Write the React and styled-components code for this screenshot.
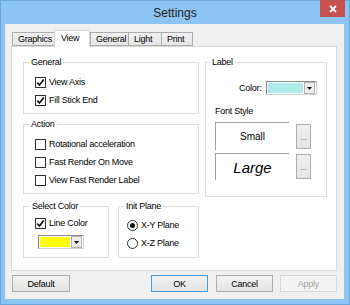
import React from 'react'
import styled, { createGlobalStyle } from 'styled-components'

const Global = createGlobalStyle`
  html, body { margin: 0; padding: 0; }
  body {
    font-family: "Liberation Sans", Arial, sans-serif;
    font-size: 9px;
    letter-spacing: -0.25px;
    color: #000;
  }
`

const Window = styled.div`
  width: 350px;
  height: 305px;
  box-sizing: border-box;
  background: #8cc4f4;
  border: 1px solid #6aa6dc;
  display: flex;
  flex-direction: column;
  position: relative;
`

const TitleBar = styled.div`
  height: 23px;
  display: flex;
  align-items: center;
  justify-content: center;
  font-size: 12px;
  letter-spacing: 0;
  color: #222;
`

const CloseBtn = styled.div`
  position: absolute;
  top: -1px;
  right: 4px;
  width: 25px;
  height: 17px;
  background: #c75050;
  display: flex;
  align-items: center;
  justify-content: center;
`

const Client = styled.div`
  margin: 0 5px 5px 4px;
  flex: 1;
  background: #f0f0f0;
  padding: 6px 7px 7px 6px;
  display: flex;
  flex-direction: column;
`

const TabStrip = styled.div`
  height: 17px;
  margin-bottom: -1px;
  padding-left: 1px;
  display: flex;
  align-items: flex-end;
`

const Tab = styled.div`
  box-sizing: border-box;
  width: ${p => p.$w}px;
  height: ${p => (p.$active ? 17 : 14)}px;
  margin-bottom: ${p => (p.$active ? 0 : 1)}px;
  padding: ${p => (p.$active ? '2px 0 0 6px' : '1px 0 0 5px')};
  border: 1px solid ${p => (p.$active ? '#d9d9d9' : '#acacac')};
  border-bottom: ${p => (p.$active ? 'none' : '1px solid #acacac')};
  border-right-width: ${p => (p.$last || p.$active ? 1 : 0)}px;
  background: ${p => (p.$active ? '#fff' : 'linear-gradient(#f2f2f2, #e6e6e6)')};
  position: relative;
  z-index: ${p => (p.$active ? 2 : 0)};
  line-height: 11px;
`

const Panel = styled.div`
  height: 225px;
  box-sizing: border-box;
  background: #fff;
  border: 1px solid #d9d9d9;
  padding: 10px 9px 0 11px;
  display: flex;
  gap: 6px;
  position: relative;
  z-index: 1;
`

const Column = styled.div`
  display: flex;
  flex-direction: column;
  width: ${p => p.$w}px;
`

const Group = styled.fieldset`
  box-sizing: border-box;
  margin: 0;
  margin-top: ${p => p.$mt || 0}px;
  width: ${p => p.$w || 'auto'};
  height: ${p => p.$h}px;
  border: 1px solid #dcdcdc;
  padding: ${p => p.$pad};
  display: flex;
  flex-direction: column;
  gap: ${p => p.$gap ?? 4}px;
  min-width: 0;
`

const Legend = styled.legend`
  padding: 0 2px;
  margin-left: ${p => p.$ml}px;
  line-height: 11px;
`

const BottomRow = styled.div`
  display: flex;
  gap: 9px;
  margin-top: 7px;
`

const Option = styled.label`
  display: flex;
  align-items: center;
  gap: 3px;
  height: 14px;
  line-height: 11px;
`

const Box = styled.span`
  width: 11px;
  height: 11px;
  box-sizing: border-box;
  border: 1px solid #333;
  background: #fff;
  display: flex;
  align-items: center;
  justify-content: center;
  border-radius: ${p => (p.$round ? '50%' : '0')};
  flex-shrink: 0;
`

const Dot = styled.span`
  width: 5px;
  height: 5px;
  border-radius: 50%;
  background: #111;
`

const Combo = styled.div`
  width: ${p => p.$w}px;
  height: 14px;
  box-sizing: border-box;
  border: 1px solid #8a8a8a;
  border-right-color: #d0d0d0;
  border-bottom-color: #d0d0d0;
  margin-left: ${p => p.$ml || 0}px;
  display: flex;
  background: #fff;
`

const Swatch = styled.div`
  flex: 1;
  background: ${p => p.$color};
  margin: 1px;
`

const Arrow = styled.div`
  width: 11px;
  box-sizing: border-box;
  border: 1px solid #b5b5b5;
  background: #eeeeee;
  display: flex;
  align-items: center;
  justify-content: center;
  margin-right: 1px;
`

const ColorRow = styled.div`
  display: flex;
  align-items: center;
  gap: 4px;
  padding-left: 24px;
  height: 14px;
`

const Caption = styled.div`
  line-height: 11px;
  margin-top: ${p => p.$mt || 0}px;
`

const FontRow = styled.div`
  display: flex;
  align-items: center;
  gap: 7px;
  height: ${p => p.$h}px;
  margin-top: ${p => p.$mt || 0}px;
`

const Sample = styled.div`
  width: 74px;
  height: 100%;
  box-sizing: border-box;
  border-top: 1px solid #a0a0a0;
  border-left: 1px solid #a0a0a0;
  display: flex;
  align-items: center;
  justify-content: center;
  font-size: ${p => p.$size}px;
  font-style: ${p => (p.$italic ? 'italic' : 'normal')};
  letter-spacing: 0;
`

const Dots = styled.div`
  width: 15px;
  height: 25px;
  box-sizing: border-box;
  border: 1px solid #adadad;
  background: linear-gradient(#f0f0f0, #e4e4e4);
  display: flex;
  align-items: center;
  justify-content: center;
  padding-top: 2px;
  font-size: 8px;
  color: #555;
  letter-spacing: 0;
`

const ButtonRow = styled.div`
  display: flex;
  margin-top: 4px;
  padding-left: 1px;
  height: 17px;
`

const Button = styled.div`
  width: ${p => p.$w || 57}px;
  margin-left: ${p => p.$ml || 0}px;
  box-sizing: border-box;
  border: 1px solid ${p => (p.$primary ? '#4a9de0' : p.$disabled ? '#d9d9d9' : '#acacac')};
  background: ${p => (p.$disabled ? '#f4f4f4' : 'linear-gradient(#f2f2f2, #e4e4e4)')};
  color: ${p => (p.$disabled ? '#a3a3a3' : '#000')};
  display: flex;
  align-items: center;
  justify-content: center;
`

const Check = () => (
  <svg width="9" height="9" viewBox="0 0 9 9">
    <path d="M1.3 4.6 L3.5 7 L7.8 1.4" fill="none" stroke="#111" strokeWidth="1.7" />
  </svg>
)

const Down = () => (
  <svg width="5" height="3" viewBox="0 0 5 3">
    <path d="M0 0 H5 L2.5 3 Z" fill="#111" />
  </svg>
)

const CheckOpt = ({ checked, children }) => (
  <Option>
    <Box>{checked && <Check />}</Box>
    {children}
  </Option>
)

const RadioOpt = ({ checked, children }) => (
  <Option>
    <Box $round>{checked && <Dot />}</Box>
    {children}
  </Option>
)

const tabs = [
  { name: 'Graphics', w: 42 },
  { name: 'View', w: 36, active: true },
  { name: 'General', w: 38 },
  { name: 'Light', w: 33 },
  { name: 'Print', w: 32, last: true },
]

export default function App() {
  return (
    <>
      <Global />
      <Window>
        <TitleBar>Settings</TitleBar>
        <CloseBtn>
          <svg width="8" height="8" viewBox="0 0 8 8">
            <path d="M1 1 L7 7 M7 1 L1 7" stroke="#fff" strokeWidth="1.8" />
          </svg>
        </CloseBtn>
        <Client>
          <TabStrip>
            {tabs.map(t => (
              <Tab key={t.name} $w={t.w} $active={t.active} $last={t.last}>
                {t.name}
              </Tab>
            ))}
          </TabStrip>
          <Panel>
            <Column $w={176}>
              <Group $h={57} $pad="7px 0 0 11px">
                <Legend $ml={-6}>General</Legend>
                <CheckOpt checked>View Axis</CheckOpt>
                <CheckOpt checked>Fill Stick End</CheckOpt>
              </Group>
              <Group $h={75} $mt={5} $pad="7px 0 0 11px">
                <Legend $ml={-6}>Action</Legend>
                <CheckOpt>Rotational acceleration</CheckOpt>
                <CheckOpt>Fast Render On Move</CheckOpt>
                <CheckOpt>View Fast Render Label</CheckOpt>
              </Group>
              <BottomRow>
                <Group $w="86px" $h={57} $pad="4px 0 0 11px" $gap={5}>
                  <Legend $ml={-5}>Select Color</Legend>
                  <CheckOpt checked>Line Color</CheckOpt>
                  <Combo $w={46} $ml={3}>
                    <Swatch $color="#ffff00" />
                    <Arrow><Down /></Arrow>
                  </Combo>
                </Group>
                <Group $w="81px" $h={57} $pad="6px 0 0 8px">
                  <Legend $ml={-3}>Init Plane</Legend>
                  <RadioOpt checked>X-Y Plane</RadioOpt>
                  <RadioOpt>X-Z Plane</RadioOpt>
                </Group>
              </BottomRow>
            </Column>
            <Column $w={122}>
              <Group $h={140} $pad="13px 0 0 9px" $gap={0}>
                <Legend $ml={-5}>Label</Legend>
                <ColorRow>
                  Color:
                  <Combo $w={51}>
                    <Swatch $color="#aeecec" />
                    <Arrow><Down /></Arrow>
                  </Combo>
                </ColorRow>
                <Caption $mt={11}>Font Style</Caption>
                <FontRow $h={28} $mt={5}>
                  <Sample $size={10}>Small</Sample>
                  <Dots>...</Dots>
                </FontRow>
                <FontRow $h={27} $mt={3}>
                  <Sample $size={15} $italic>Large</Sample>
                  <Dots>...</Dots>
                </FontRow>
              </Group>
            </Column>
          </Panel>
          <ButtonRow>
            <Button $w={58}>Default</Button>
            <Button $primary $ml={81}>OK</Button>
            <Button $ml={8}>Cancel</Button>
            <Button $disabled $ml={7}>Apply</Button>
          </ButtonRow>
        </Client>
      </Window>
    </>
  )
}
